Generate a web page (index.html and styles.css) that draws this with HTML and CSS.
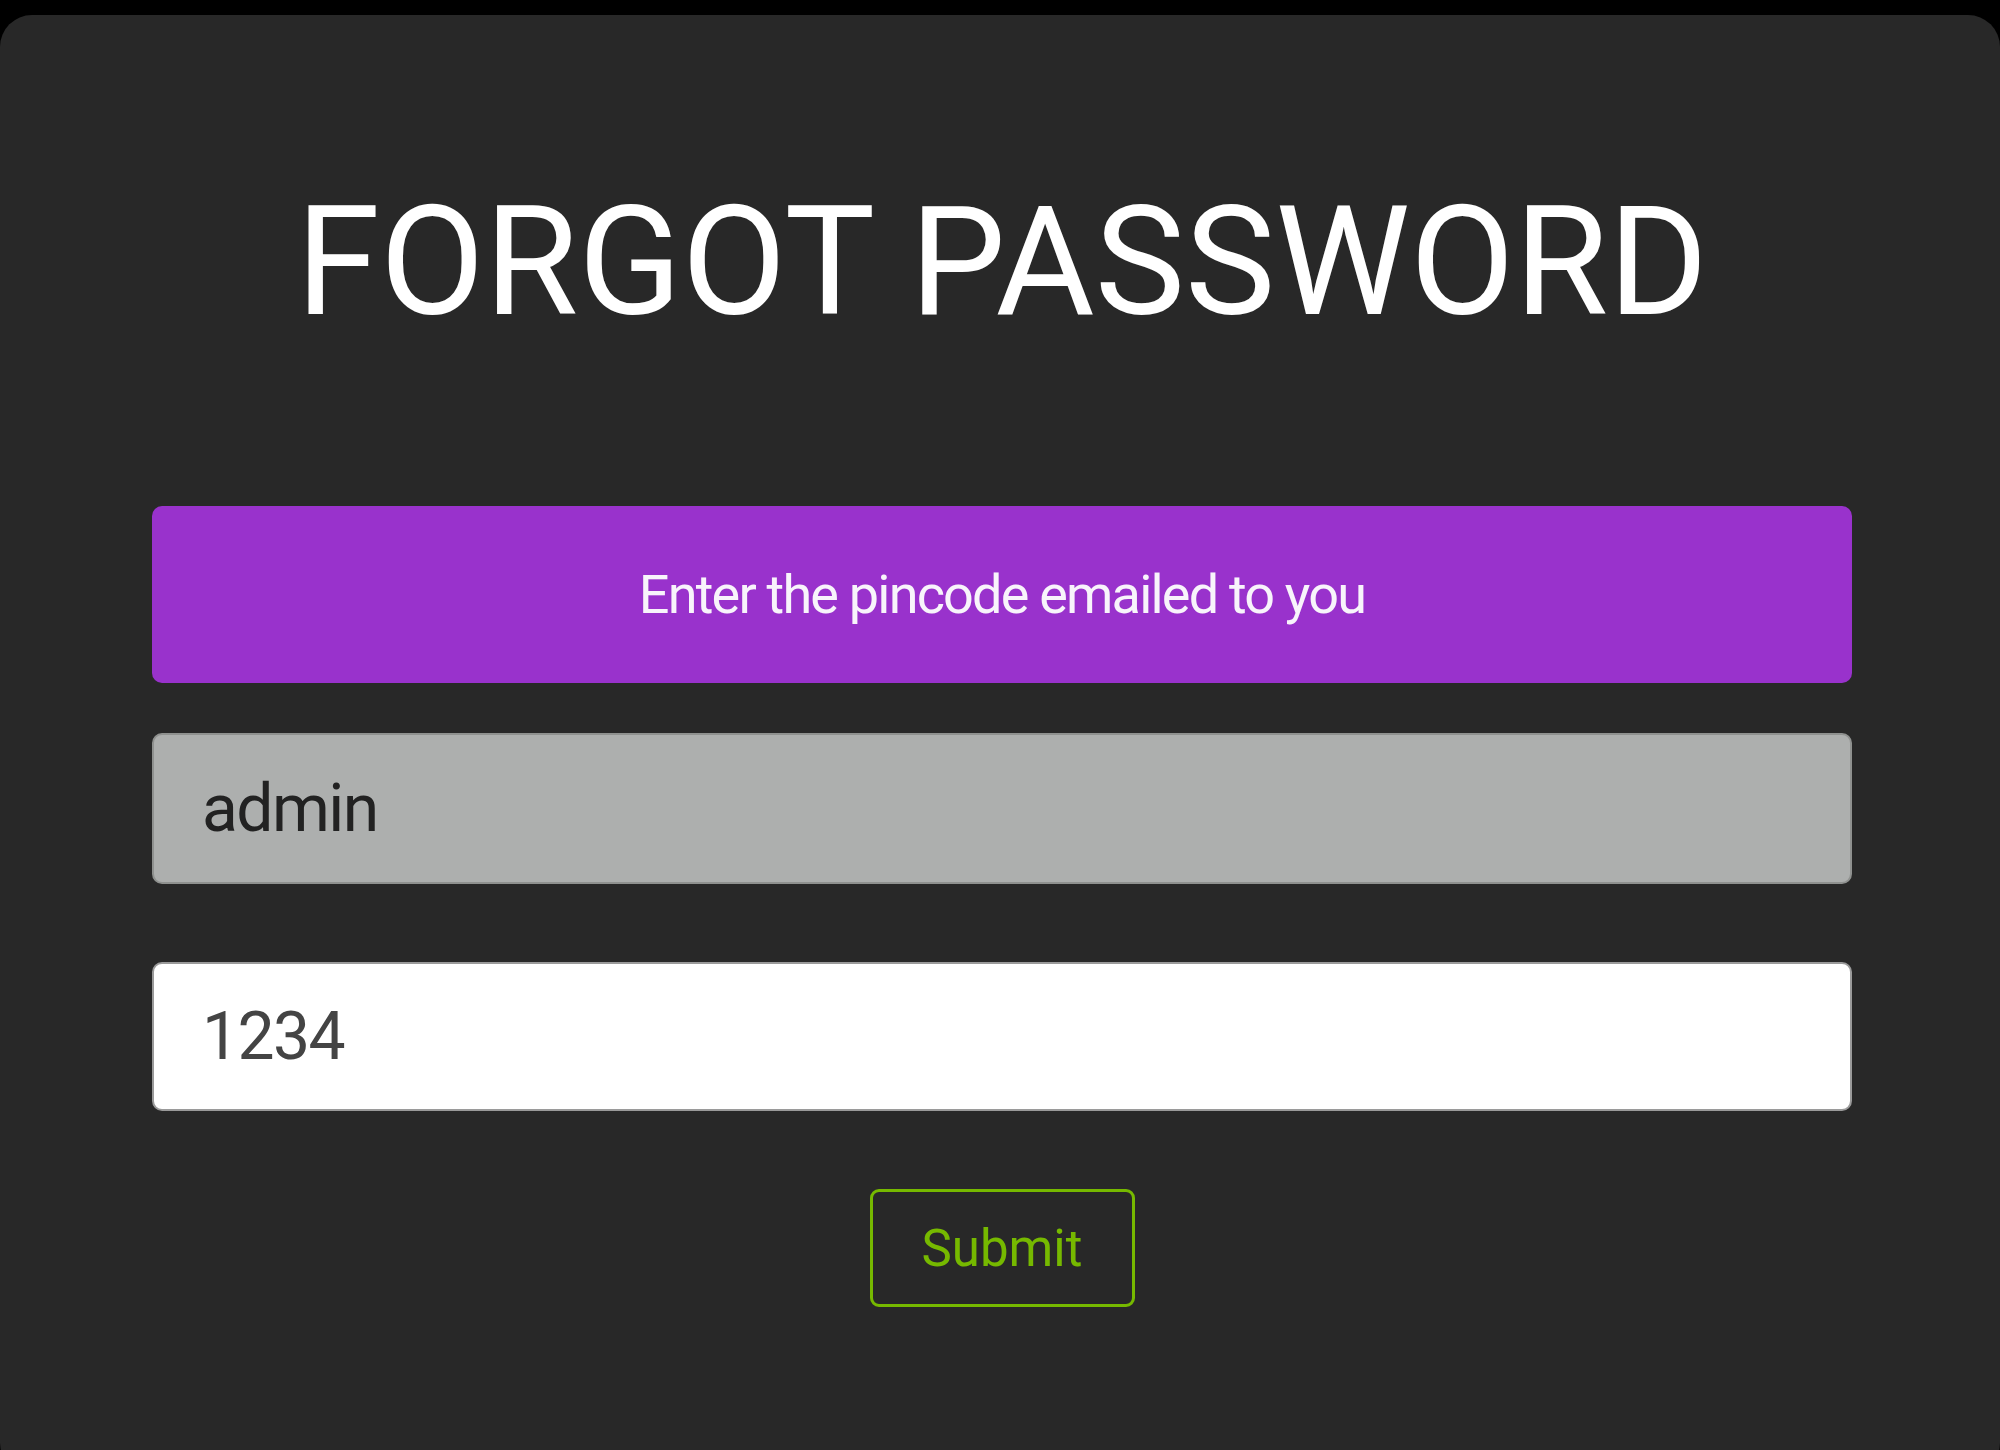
FILE: index.html
```html
<!DOCTYPE html>
<html lang="en">
<head>
<meta charset="utf-8">
<title>Forgot Password</title>
<link rel="stylesheet" href="styles.css">
</head>
<body>
<main class="card">
  <h1 class="title">FORGOT PASSWORD</h1>
  <form class="form">
    <div class="notice">Enter the pincode emailed to you</div>
    <input class="field field-locked" type="text" value="admin" readonly>
    <input class="field field-pin" type="text" value="1234">
    <button class="submit" type="button">Submit</button>
  </form>
</main>
</body>
</html>
```

FILE: styles.css
```css
html, body {
  margin: 0;
  padding: 0;
  background: #000;
  overflow: hidden;
}

body {
  font-family: Roboto, "Liberation Sans", sans-serif;
}

.card {
  margin-top: 15px;
  height: 1460px;
  background: #282828;
  border-radius: 32px;
  box-sizing: border-box;
  padding: 0 148px 0 152px;
  display: flex;
  flex-direction: column;
  align-items: center;
}

.title {
  margin: 171px 0 0;
  font-size: 152px;
  font-weight: 400;
  line-height: 1;
  color: #fff;
  letter-spacing: 0;
}

.form {
  width: 100%;
  margin-top: 168px;
  display: flex;
  flex-direction: column;
  align-items: center;
}

.notice {
  width: 100%;
  height: 177px;
  box-sizing: border-box;
  background: #9932cc;
  border-radius: 10px;
  color: #f8f4fb;
  font-size: 54px;
  letter-spacing: -1.8px;
  line-height: 1;
  display: flex;
  align-items: center;
  justify-content: center;
}

.field {
  width: 100%;
  height: 151px;
  box-sizing: border-box;
  border: 2px solid #8a8a8a;
  border-radius: 10px;
  padding: 0 48px;
  font-family: Roboto, "Liberation Sans", sans-serif;
  font-size: 66px;
  letter-spacing: -1.6px;
  outline: none;
}

.field-locked {
  margin-top: 50px;
  background: #adafae;
  color: #222;
  border-color: #8f918f;
}

.field-pin {
  margin-top: 78px;
  height: 149px;
  background: #fff;
  color: #444;
  border-color: #9a9a9a;
}

.submit {
  margin-top: 78px;
  width: 265px;
  height: 118px;
  box-sizing: border-box;
  background: transparent;
  border: 3px solid #76b900;
  border-radius: 9px;
  color: #76b900;
  font-family: Roboto, "Liberation Sans", sans-serif;
  font-size: 51px;
  padding: 0;
  cursor: pointer;
}
```
